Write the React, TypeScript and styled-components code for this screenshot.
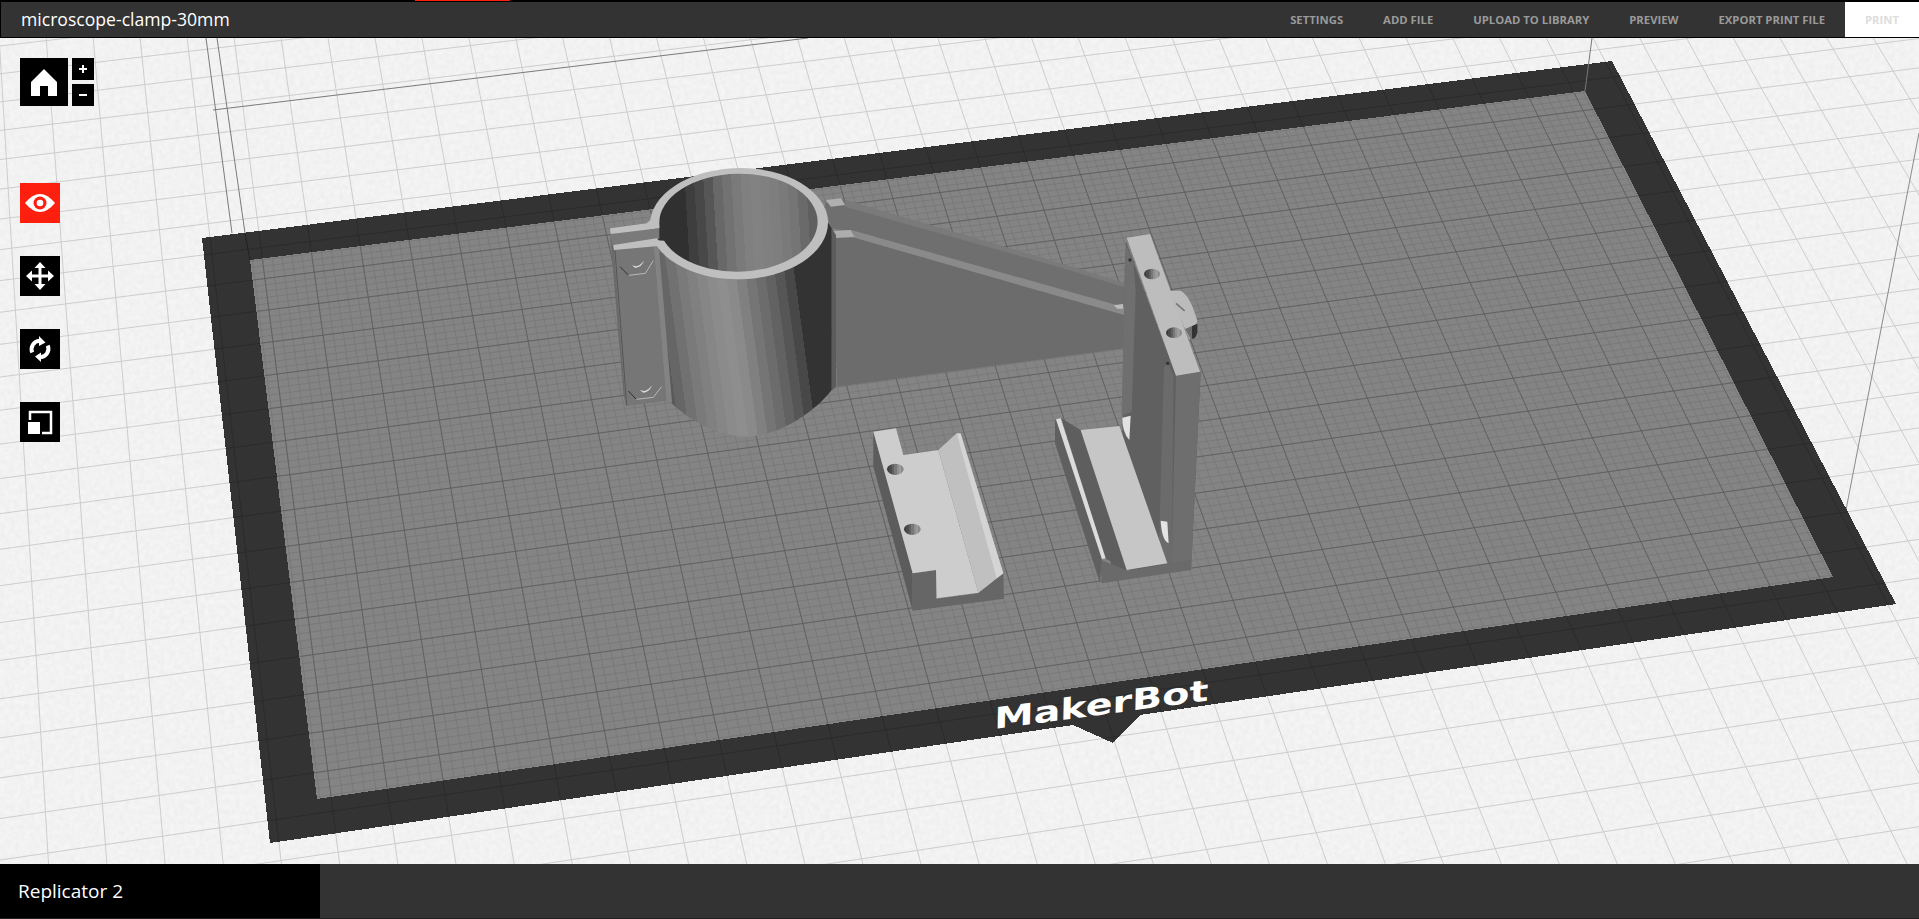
import React from 'react';
import styled, { createGlobalStyle } from 'styled-components';

const Global = createGlobalStyle`
  html, body { margin: 0; padding: 0; height: 100%; overflow: hidden; background: #222; }
  #root { height: 100%; }
`;

const Shell = styled.div`
  height: 919px; width: 1919px; display: flex; flex-direction: column; overflow: hidden;
  font-family: "Open Sans", "Noto Sans", sans-serif;
`;
const TopBar = styled.header`
  position: relative; flex: none; height: 35px; display: flex; align-items: center; justify-content: space-between;
  background: #333; border-top: 2px solid #000; border-bottom: 1px solid #000; border-left: 1px solid #000;
`;
const Progress = styled.span`
  position: absolute; top: -2px; left: 414px; width: 95px; height: 1px; background: #ff1f0f;
`;
const FileName = styled.h1`
  margin: 0 0 0 20px; font-size: 17.6px; font-weight: 400; color: #fff; line-height: 35px;
`;
const Actions = styled.nav`
  display: flex; height: 100%; align-items: stretch;
`;
const Action = styled.button<{ $primary?: boolean }>`
  border: 0; padding: 0 20px; font-family: "Open Sans", sans-serif; font-size: 11.3px; font-weight: 700;
  letter-spacing: 0; text-transform: uppercase; cursor: pointer;
  background: ${p => (p.$primary ? '#fff' : 'transparent')};
  color: ${p => (p.$primary ? '#ddd' : '#9a9a9a')};
`;
const Stage = styled.main`
  position: relative; flex: 1; min-height: 0; background: #f4f4f4;
`;
const Scene = styled.svg`
  display: block; width: 100%; height: 100%;
`;
const LogoText = styled.text`
  font-family: "DejaVu Sans", sans-serif; font-weight: 700; font-size: 29px; fill: #fff;
`;
const Mark = styled.text`
  font-family: "DejaVu Sans", sans-serif; font-size: 5px; fill: #bbb;
`;
const Tools = styled.aside`
  position: absolute; left: 20px; top: 20px; display: flex; flex-direction: column; align-items: flex-start;
`;
const ViewGroup = styled.div`
  display: flex; gap: 4px; margin-bottom: 77px;
`;
const HomeButton = styled.button`
  width: 48px; height: 48px; border: 0; padding: 0; background: #000; display: block;
`;
const ZoomColumn = styled.div`
  display: flex; flex-direction: column; gap: 4px;
`;
const ZoomButton = styled.button`
  width: 22px; height: 22px; border: 0; padding: 0; background: #000; display: block;
`;
const ToolColumn = styled.div`
  display: flex; flex-direction: column; gap: 33px;
`;
const ToolButton = styled.button<{ $active?: boolean }>`
  width: 40px; height: 40px; border: 0; padding: 0; display: block;
  background: ${p => (p.$active ? '#ff1f0f' : '#000')};
`;
const Icon = styled.svg`
  display: block; width: 100%; height: 100%;
`;
const BottomBar = styled.footer`
  flex: none; height: 54px; margin-bottom: 1px; display: flex; background: #333;
`;
const PrinterName = styled.div`
  width: 320px; background: #000; color: #fff; font-size: 19px; line-height: 54px; padding-left: 18px; box-sizing: border-box;
`;

type Pt = [number, number];
function homography(p: Pt[]) {
  const [[x0, y0], [x1, y1], [x2, y2], [x3, y3]] = p;
  const dx1 = x1 - x2, dx2 = x3 - x2, sx = x0 - x1 + x2 - x3;
  const dy1 = y1 - y2, dy2 = y3 - y2, sy = y0 - y1 + y2 - y3;
  const den = dx1 * dy2 - dx2 * dy1;
  const g = (sx * dy2 - dx2 * sy) / den, h = (dx1 * sy - sx * dy1) / den;
  const a = x1 - x0 + g * x1, b = x3 - x0 + h * x3, d = y1 - y0 + g * y1, e = y3 - y0 + h * y3;
  return { g, h, map: (u: number, v: number): Pt => {
    const w = g * u + h * v + 1;
    return [(a * u + b * v + x0) / w, (d * u + e * v + y0) / w];
  } };
}
const W = 285, D = 153;
const H = homography([[250, 260], [1585, 91], [1833, 577], [317, 799]]);
const seg = (u0: number, v0: number, u1: number, v1: number) => {
  const a = H.map(u0 / W, v0 / D), b = H.map(u1 / W, v1 / D);
  return `M${a[0].toFixed(1)} ${a[1].toFixed(1)}L${b[0].toFixed(1)} ${b[1].toFixed(1)}`;
};
const linesAt = (step: number, uMin: number, uMax: number, vMin: number, vMax: number) => {
  let d = '';
  const cx = W / 2, cy = D / 2;
  const n = Math.ceil(1400 / step);
  for (let k = -n; k <= n; k++) {
    const u = cx + k * step;
    if (u >= uMin && u <= uMax) d += seg(u, vMin, u, vMax);
    const v = cy + k * step;
    if (v >= vMin && v <= vMax) d += seg(uMin, v, uMax, v);
  }
  return d;
};
const floorLines = linesAt(10, -170, 440, -190, 290);
const plateMajor = linesAt(10, 0, W, 0, D);
const plateMinor = linesAt(2, 0, W, 0, D);

const stepped = (colors: string[]) => colors.flatMap((c, i) => [
  <stop key={i + 'a'} offset={i / colors.length} stopColor={c} />,
  <stop key={i + 'b'} offset={(i + 1) / colors.length} stopColor={c} />,
]);
const bodyColors = ['#5a5a5a', '#666666', '#717171', '#7a7a7a', '#808080', '#868686', '#8b8b8b', '#8e8e8e', '#8a8a8a', '#808080', '#757575', '#6c6c6c', '#626262', '#565656', '#484848', '#333333', '#333333', '#333333'];
const boreColors = ['#303030', '#303030', '#303030', '#3e3e3e', '#484848', '#565656', '#686868', '#727272', '#7a7a7a', '#808080', '#828282', '#808080', '#7e7e7e', '#7a7a7a', '#757575', '#6a6a6a', '#5f5f5f'];
const holeColors = ['#3c3c3c', '#4c4c4c', '#606060', '#787878', '#8e8e8e', '#9c9c9c', '#8a8a8a'];

const Hole = ({ cx, cy, rx, ry }: { cx: number; cy: number; rx: number; ry: number }) => (
  <ellipse cx={cx} cy={cy} rx={rx} ry={ry} fill="url(#hole)" />
);

const Model = () => (
  <>
    {/* arm, drawn in a 2.45 x 3 crop's space */}
    <g transform="translate(590 150) scale(0.40816 0.33333)">
      <polygon points="575,160 625,150 1310,408 1310,470 1285,465 640,245 590,235" fill="#6f6f6f" />
      <polygon points="625,150 1150,338 1310,400 1310,412 1150,352 625,170" fill="#7a7a7a" />
      <polygon points="578,150 615,145 625,165 590,170" fill="#b0b0b0" />
      <polygon points="595,262 645,262 1310,495 1310,595 605,710" fill="#6c6c6c" />
      <polygon points="590,245 640,240 1310,472 1310,495 645,262 595,264" fill="#8a8a8a" />
      <polygon points="590,243 638,240 648,260 595,264" fill="#adadad" />
      <polygon points="1283,466 1306,462 1306,476 1292,476" fill="#bbb" />
    </g>

    {/* clamp, drawn in a 3 x 3 crop's space */}
    <g transform="translate(600 160) scale(0.33333)">
      <polygon points="695,205 708,225 708,680 695,692" fill="#5c5c5c" />
      <path d="M172 280 L215 730 C280 790 360 830 440 830 C540 825 640 760 695 690 L695 205 L683 185 Z" fill="url(#body)" />

      <polygon points="30,222 42,270 78,738 70,700" fill="#6a6a6a" />
      <polygon points="42,270 162,255 200,722 78,738" fill="#767676" />
      <line x1="45" y1="272" x2="80" y2="736" stroke="#4e4e4e" strokeWidth="2.5" />
      <polygon points="162,258 176,256 216,726 200,724" fill="#838383" />
      <polygon points="32,222 178,205 178,236 40,255" fill="#7a7a7a" />

      <ellipse cx="417" cy="191" rx="267" ry="167" transform="rotate(-1 417 191)" fill="#bfbfbf" />
      <ellipse cx="415" cy="188" rx="238" ry="147" transform="rotate(-1 415 188)" fill="url(#bore)" />
      <polygon points="150,206 195,200 195,242 150,240" fill="#303030" />
      <polygon points="32,222 178,205 178,236 40,255" fill="#7a7a7a" />
      <path d="M30 205 L140 190 Q160 175 178 150 Q178 180 178 205 L32 222 Z" fill="#bfbfbf" />
      <path d="M40 255 L170 235 Q186 254 212 275 L176 258 L42 270 Z" fill="#bfbfbf" />

      <polyline points="60,320 86,346" fill="none" stroke="#2f2f2f" strokeWidth="3" />
      <polyline points="86,346 136,340 160,302" fill="none" stroke="#b8b8b8" strokeWidth="3" />
      <path d="M88 308 Q108 332 132 302 Q126 320 106 324 Z" fill="#dcdcdc" />
      <polyline points="85,693 109,718" fill="none" stroke="#2f2f2f" strokeWidth="3" />
      <polyline points="109,718 160,712 185,680" fill="none" stroke="#b8b8b8" strokeWidth="3" />
      <path d="M112 684 Q134 706 156 676 Q150 696 130 698 Z" fill="#dcdcdc" />
    </g>

    {/* upright bracket */}
    <g transform="translate(1090 225) scale(0.33333)">
      <polygon points="108,50 258,452 332,440 303,1035 60,1035 96,700 105,115" fill="#606060" />
      <polygon points="258,452 332,440 303,1035 245,1035" fill="#6e6e6e" />
      <polygon points="108,60 130,112 137,200 125,560 95,572 105,112" fill="#6f6f6f" />
      <polygon points="232,412 250,450 246,1035 205,1035 222,430" fill="#6b6b6b" />
      <circle cx="120" cy="105" r="5" fill="#333" />
      <circle cx="233" cy="415" r="5" fill="#333" />
      <path d="M97 578 L122 572 L118 645 Q96 620 97 578 Z" fill="#e2e2e2" />
      <polygon points="110,38 180,27 330,440 258,452" fill="#bdbdbd" />
      <path d="M235 197 L272 197 Q300 210 322 288 L300 345 L285 312 Z" fill="#bbbbbb" />
      <path d="M285 312 L322 296 L322 322 Q316 345 302 342 Z" fill="#6e6e6e" />
      <path d="M306 304 L322 296 L322 322 Q316 345 306 340 Z" fill="#333" />
      <line x1="258" y1="235" x2="284" y2="258" stroke="#777" strokeWidth="5" />
      <Hole cx={186} cy={147} rx={24} ry={16} />
      <Hole cx={252} cy={323} rx={24} ry={16} />
    </g>

    {/* loose parts */}
    <g transform="translate(840 400) scale(0.33333)">
      <path d="M962 362 L982 365 L986 430 Q965 420 962 362Z" fill="#e4e4e4" />
      <polygon points="780,478 860,512 982,492 1053,478 1053,510 785,550" fill="#6a6a6a" />
      <polygon points="645,65 648,58 785,475 780,550 645,130" fill="#606060" />
      <polygon points="664,55 722,90 862,512 795,475" fill="#5e5e5e" />
      <polygon points="648,58 662,55 797,475 786,477" fill="#dcdcdc" />
      <polygon points="722,90 838,78 982,490 860,510" fill="#c6c6c6" />

      <polygon points="100,95 100,200 218,632 218,520" fill="#5c5c5c" />
      <polygon points="218,520 288,510 288,597 415,580 490,520 492,596 218,632" fill="#666666" />
      <polygon points="100,95 168,85 190,165 295,150 415,578 290,595 288,510 218,520" fill="#cdcdcd" />
      <polygon points="295,150 350,100 490,520 415,578" fill="#c0c0c0" />
      <polygon points="350,100 362,100 490,520 470,535" fill="#d4d4d4" />
      <Hole cx={166} cy={208} rx={25} ry={17} />
      <Hole cx={217} cy={388} rx={25} ry={17} />
    </g>
  </>
);

const App = () => (
  <Shell>
    <Global />
    <TopBar>
      <Progress />
      <FileName>microscope-clamp-30mm</FileName>
      <Actions>
        <Action>Settings</Action>
        <Action>Add File</Action>
        <Action>Upload to Library</Action>
        <Action>Preview</Action>
        <Action>Export Print File</Action>
        <Action $primary>Print</Action>
      </Actions>
    </TopBar>
    <Stage>
      <Scene viewBox="0 38 1919 826" preserveAspectRatio="none">
        <defs>
          <filter id="grain" x="0" y="0" width="100%" height="100%">
            <feTurbulence type="fractalNoise" baseFrequency="0.2" numOctaves="2" seed="4" />
            <feColorMatrix values="0 0 0 0 0  0 0 0 0 0  0 0 0 0 0  0.05 0 0 0 -0.012" />
          </filter>
          <clipPath id="plate"><polygon points="250,260 1585,91 1833,577 317,799" /></clipPath>
          <clipPath id="bed"><polygon points="202,238 1612,61 1896,604 1140,715 1113,743 1073,725 270,843" /></clipPath>
          <linearGradient id="body" gradientUnits="userSpaceOnUse" x1={172} y1={550} x2={690} y2={480}>{stepped(bodyColors)}</linearGradient>
          <linearGradient id="bore" gradientUnits="userSpaceOnUse" x1={178} y1={190} x2={653} y2={170}>{stepped(boreColors)}</linearGradient>
          <linearGradient id="hole" x1="0" x2="1" y1="0" y2="0">{stepped(holeColors)}</linearGradient>
        </defs>
        <rect x="0" y="38" width="1919" height="826" fill="#f5f5f5" />
        <rect x="0" y="38" width="1919" height="826" filter="url(#grain)" />
        <path d={floorLines} stroke="#cdcdcd" strokeWidth="1" fill="none" />

        <line x1="206" y1="38" x2="232" y2="233" stroke="#7a7a7a" />
        <line x1="217" y1="38" x2="245" y2="233" stroke="#7a7a7a" />
        <line x1="213" y1="110" x2="808" y2="38" stroke="#7a7a7a" />
        <line x1="1919" y1="133" x2="1833" y2="577" stroke="#8a8a8a" />

        <polygon points="202,238 1612,61 1896,604 1140,715 1113,743 1073,725 270,843" fill="#333" shapeRendering="crispEdges" />
        <path d={floorLines} clipPath="url(#bed)" stroke="#2b2b2b" strokeWidth="1" fill="none" />
        <polygon points="250,260 1585,91 1833,577 317,799" fill="#848484" shapeRendering="crispEdges" />
        <path d={plateMinor} clipPath="url(#plate)" stroke="#767676" strokeWidth="0.7" fill="none" />
        <path d={plateMajor} clipPath="url(#plate)" stroke="#5c5c5c" strokeWidth="0.8" fill="none" />
        <line x1="1592" y1="38" x2="1585" y2="91" stroke="#777" />
        <line x1="245" y1="233" x2="250" y2="260" stroke="#222" />

        <LogoText transform="translate(994 729) rotate(-7.6) skewX(-9)" textLength="216" lengthAdjust="spacingAndGlyphs">MakerBot</LogoText>
        <Mark x="1199" y="686">®</Mark>
        <Model />
      </Scene>
      <Tools>
        <ViewGroup>
          <HomeButton aria-label="Home">
            <Icon viewBox="0 0 48 48"><path d="M24 11 L37 24 V38 H28 V28 H20 V38 H11 V24 Z" fill="#fff" /></Icon>
          </HomeButton>
          <ZoomColumn>
            <ZoomButton aria-label="Zoom in">
              <Icon viewBox="0 0 22 22"><path d="M7 11H15M11 7V15" stroke="#fff" strokeWidth="2" /></Icon>
            </ZoomButton>
            <ZoomButton aria-label="Zoom out">
              <Icon viewBox="0 0 22 22"><path d="M7 11H15" stroke="#fff" strokeWidth="2" /></Icon>
            </ZoomButton>
          </ZoomColumn>
        </ViewGroup>
        <ToolColumn>
          <ToolButton $active aria-label="View">
            <Icon viewBox="0 0 40 40">
              <path d="M5 20 Q20 2 35 20 Q20 38 5 20 Z" fill="#fff" />
              <circle cx="20" cy="20" r="6.5" fill="#ff1f0f" />
              <circle cx="20" cy="20" r="3.3" fill="#fff" />
            </Icon>
          </ToolButton>
          <ToolButton aria-label="Move">
            <Icon viewBox="0 0 40 40">
              <path d="M20 6 L25.5 12 H21.5 V18.5 H28 V14.5 L34 20 L28 25.5 V21.5 H21.5 V28 H25.5 L20 34 L14.5 28 H18.5 V21.5 H12 V25.5 L6 20 L12 14.5 V18.5 H18.5 V12 H14.5 Z" fill="#fff" />
            </Icon>
          </ToolButton>
          <ToolButton aria-label="Rotate">
            <Icon viewBox="0 0 40 40">
              <path d="M12.2 23.5 A8.5 8.5 0 0 1 19.5 11.8" fill="none" stroke="#fff" strokeWidth="4" />
              <path d="M27.8 16.5 A8.5 8.5 0 0 1 20.5 28.2" fill="none" stroke="#fff" strokeWidth="4" />
              <path d="M19 7 L25.5 13.5 L19 17 Z M21 33 L15 27.5 L21 23.5 Z" fill="#fff" />
            </Icon>
          </ToolButton>
          <ToolButton aria-label="Scale">
            <Icon viewBox="0 0 40 40">
              <path d="M10 18 V10 H31 V31 H22" fill="none" stroke="#fff" strokeWidth="2.5" />
              <rect x="8" y="20" width="12" height="12" fill="#fff" />
            </Icon>
          </ToolButton>
        </ToolColumn>
      </Tools>
    </Stage>
    <BottomBar>
      <PrinterName>Replicator 2</PrinterName>
    </BottomBar>
  </Shell>
);

export default App;
